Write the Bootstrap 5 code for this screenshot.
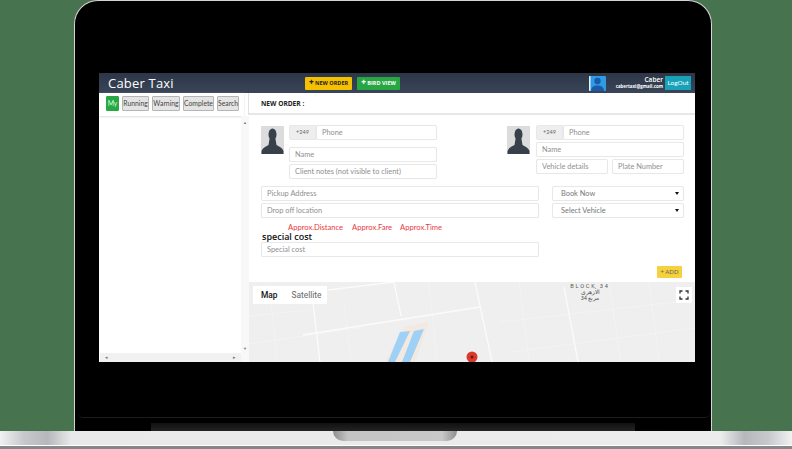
<!DOCTYPE html>
<html lang="en">
<head>
<meta charset="UTF-8">
<meta name="viewport" content="width=device-width, initial-scale=1.0">
<title>Caber Taxi</title>
<link rel="stylesheet" href="https://cdn.jsdelivr.net/npm/bootstrap@5.3.0/dist/css/bootstrap.min.css">
<style>
html, body { margin: 0; width: 792px; height: 449px; overflow: hidden; }
body { background: #47734f; font-family: Lato, "Liberation Sans", sans-serif; font-size: 7.5px; color: #222; }

/* laptop */
.lid { width: 638px; height: 431px; margin-left: 74px; padding: 72px 0 0 24px; background: #000; border: solid #d4d4d4; border-width: 1px 1px 0 1px; border-radius: 24px 24px 0 0; }
.lid-line { width: 632px; height: 5px; margin: 51px 0 0 -21px; border-bottom: 1px solid #1c1c1c; border-radius: 0 0 10px 10px; }
.lid-strip { width: 484px; height: 8px; margin: 5px 0 0 52px; background: linear-gradient(#111, #232323); }
.base { height: 18px; background: linear-gradient(90deg, #f1f1f1 0, #c6c9cc 3%, #b4b8bc 6%, #e9e9e9 9%, #ececec 91%, #b4b8bc 94%, #c6c9cc 97%, #f1f1f1 100%); border-bottom: 3px solid #85878a; box-shadow: inset 0 -1px 0 #fff; }
.notch { width: 124px; height: 10px; margin-left: 333px; background: linear-gradient(90deg, #8e8e8e, #c4c4c4 12%, #c8c8c8 88%, #8e8e8e); border-radius: 0 0 10px 10px; }

/* app */
.screen { width: 596px; height: 289px; background: #fff; overflow: hidden; }
.topbar { height: 20px; background: linear-gradient(#2c3647, #3a4558); color: #fff; }
.brand-name { width: 206px; padding-left: 9px; font: 400 13px "Open Sans", sans-serif; letter-spacing: .2px; }
.top-btn { height: 13px; padding: 0 3px; border: 0; border-radius: 1px; font: 700 5.5px/13px "Open Sans", sans-serif; }
.top-btn b { font-size: 8px; line-height: 1; }
.btn-order { width: 47px; background: #f5c000; color: #222; }
.btn-bird { width: 43px; margin-left: 5px; background: #27a744; color: #fff; }
.user-pic { width: 17px; height: 15px; margin-right: 3px; border-radius: 1px; }
.user-info { width: 54px; text-align: right; line-height: 7px; font-family: "Open Sans", sans-serif; }
.user-info strong { display: block; font-size: 6.5px; font-weight: 600; }
.user-info span { display: block; font-size: 4.4px; font-weight: 700; white-space: nowrap; }
.logout-btn { width: 26px; height: 14px; margin: 0 4px 0 2px; padding: 0; border: 0; border-radius: 0; background: #17a2b8; color: #fff; font-size: 6.5px; line-height: 14px; }

.main-row { height: 269px; }
.side-panel { width: 150px; flex: none; position: relative; }
.side-tabs { height: 23px; gap: 3px; padding: 3px 0 0 7px; box-shadow: 0 1px 2px #ddd; width: 145px; }
.tab-btn { height: 15px; padding: 0; border: 1px solid #b5b5b5; border-radius: 1px; background: #e4e4e4; color: #444; font-size: 6.8px; line-height: 13px; text-align: center; }
.tab-my { width: 13px; background: #28a745; border-color: #28a745; color: #dfd; }
.tab-w1 { width: 27px; } .tab-w2 { width: 28px; } .tab-w3 { width: 31px; } .tab-w4 { width: 22px; }
.scroll-v { width: 8px; height: 246px; margin-left: auto; padding: 4px 0 10px; background: #f8f8f8; color: #777; font-size: 4px; text-align: center; }
.scroll-h { position: absolute; left: 1px; bottom: 0; width: 141px; height: 9px; padding: 0 5px; background: #f1f1f1; color: #777; font-size: 5px; line-height: 9px; }

.order-panel { flex: 1; min-width: 0; }
.order-head { height: 22px; padding: 6px 0 0 12px; border-bottom: 2px solid #e7e7e7; box-shadow: -1px 0 0 #e2e2e2; font: 700 6.6px/10px "Open Sans", sans-serif; color: #222; }
.order-form { height: 167px; padding: 10px 11px 0 12px; }
.field { display: block; width: 100%; height: 15px; padding: 0 5px; border: 1px solid #e8e8e8; border-radius: 2px; background-color: #fff; box-shadow: 0 0 1px #eee; font-size: 7.4px; line-height: 13px; color: #777; }
.field::placeholder { color: #8f8f8f; }
.prefix { width: 27px; height: 15px; flex: none; background: #eee; border: 1px solid #e8e8e8; border-radius: 2px 0 0 2px; color: #666; font-size: 5.5px; line-height: 13px; text-align: center; }
.face { width: 23px; height: 28px; flex: none; margin-top: 1px; background: #dcdcdc; }
.person-a { width: 176px; }
.person-b { width: 177px; margin-left: 70px; }
.person-a .stack { width: 148px; margin-left: 5px; }
.person-b .stack { width: 148px; margin-left: 6px; }
.space-2 { margin-top: 2px; }
.space-7 { margin-top: 7px; }
.pick-field { width: 278px; }
.pick-select { width: 132px; margin-left: 13px; background: #fff url("data:image/svg+xml,%3Csvg xmlns='http://www.w3.org/2000/svg' width='4' height='3'%3E%3Cpath d='M0 0h4L2 3z' fill='%23111'/%3E%3C/svg%3E") no-repeat right 4px center; appearance: none; padding-left: 8px; }
.approx { padding: 4px 0 0 27px; height: 13px; color: #e8393f; font-size: 7.6px; line-height: 10px; }
.approx span:nth-child(1) { width: 64px; }
.approx span:nth-child(2) { width: 48px; }
.cost-label { height: 11px; padding-left: 1px; font: 600 9px/11px "Open Sans", sans-serif; color: #111; }
.add-btn { width: 25px; height: 12px; margin: 9px 2px 0 auto; padding: 0; border: 0; border-radius: 1px; background: #f4d13d; color: #665; font-size: 6px; line-height: 12px; }

.map-box { position: relative; height: 80px; background: #efefef; overflow: hidden; }
.map-box svg { display: block; }
.map-type { position: absolute; top: 4px; left: 4px; width: 74px; height: 18px; gap: 14px; padding-left: 8px; background: #fff; font: 8.4px/18px Roboto, sans-serif; }
.map-type strong { font-weight: 500; color: #111; }
.map-type span { color: #666; }
.map-full { position: absolute; top: 5px; right: 3px; width: 16px; height: 16px; background: #fff; }
.map-label { position: absolute; top: 1px; left: 318px; width: 46px; color: #555; font: 5.6px/6px Roboto, "Noto Sans", sans-serif; letter-spacing: 1.8px; text-align: center; }
.map-label span { letter-spacing: 0; }
</style>
</head>
<body>

<div class="lid">
    <div class="screen">
        <!-- top bar -->
        <div class="topbar d-flex align-items-center">
            <div class="brand-name">Caber Taxi</div>
            <button class="top-btn btn-order"><b>+</b> NEW ORDER</button>
            <button class="top-btn btn-bird"><b>+</b> BIRD VIEW</button>
            <div class="ms-auto d-flex align-items-center">
                <svg class="user-pic" viewBox="0 0 17 15"><rect width="17" height="15" fill="#2f9be6"/><rect width="1.500" height="15" fill="#e9f4fb"/><circle cx="8.500" cy="5" r="3.200" fill="#1a5aa8"/><path d="M2 15c0-4 3-5.500 6.500-5.500S15 11 15 15z" fill="#1a5aa8"/></svg>
                <div class="user-info"><strong>Caber</strong><span>cabertaxi@gmail.com</span></div>
                <button class="logout-btn">LogOut</button>
            </div>
        </div>

        <div class="main-row d-flex">
            <!-- left list -->
            <div class="side-panel">
                <div class="side-tabs d-flex">
                    <div class="tab-btn tab-my">My</div>
                    <div class="tab-btn tab-w1">Running</div>
                    <div class="tab-btn tab-w2">Warning</div>
                    <div class="tab-btn tab-w3">Complete</div>
                    <div class="tab-btn tab-w4">Search</div>
                </div>
                <div class="scroll-v d-flex flex-column justify-content-between"><span>&#9650;</span><span>&#9660;</span></div>
                <div class="scroll-h d-flex justify-content-between"><span>&#9666;</span><span>&#9656;</span></div>
            </div>

            <!-- order form -->
            <div class="order-panel">
                <div class="order-head">NEW ORDER :</div>
                <div class="order-form">
                    <div class="d-flex">
                        <div class="person-a d-flex">
                            <svg class="face" viewBox="0 0 23 28"><ellipse cx="11.500" cy="8.500" rx="4" ry="6" fill="#38404c"/><path d="M8.500 13h6l1 6c3 1.500 6 3 7 6v3H.5v-3c1-3 4-4.500 7-6z" fill="#38404c"/></svg>
                            <div class="stack">
                                <div class="d-flex"><div class="prefix">+249</div><input class="field form-control" placeholder="Phone"></div>
                                <input class="field form-control space-7" placeholder="Name">
                                <input class="field form-control space-2" placeholder="Client notes (not visible to client)">
                            </div>
                        </div>
                        <div class="person-b d-flex">
                            <svg class="face" viewBox="0 0 23 28"><ellipse cx="11.500" cy="8.500" rx="4" ry="6" fill="#38404c"/><path d="M8.500 13h6l1 6c3 1.500 6 3 7 6v3H.5v-3c1-3 4-4.500 7-6z" fill="#38404c"/></svg>
                            <div class="stack">
                                <div class="d-flex"><div class="prefix">+249</div><input class="field form-control" placeholder="Phone"></div>
                                <input class="field form-control space-2" placeholder="Name">
                                <div class="d-flex gap-1 space-2"><input class="field form-control" placeholder="Vehicle details"><input class="field form-control" placeholder="Plate Number"></div>
                            </div>
                        </div>
                    </div>

                    <div class="d-flex space-7"><input class="field form-control pick-field" placeholder="Pickup Address"><select class="field pick-select"><option>Book Now</option></select></div>
                    <div class="d-flex space-2"><input class="field form-control pick-field" placeholder="Drop off location"><select class="field pick-select"><option>Select Vehicle</option></select></div>

                    <div class="approx d-flex"><span>Approx.Distance</span><span>Approx.Fare</span><span>Approx.Time</span></div>
                    <div class="cost-label">special cost</div>
                    <input class="field form-control pick-field" placeholder="Special cost">
                    <button class="add-btn d-block">+ ADD</button>
                </div>

                <!-- map -->
                <div class="map-box">
                    <svg width="446" height="80" viewBox="0 0 446 80">
                        <g stroke="#f5f5f5" stroke-width=".7" fill="none">
                            <path d="M20 0l8 80M95 20l7 60M180 0l8 80M270 0l10 80M360 0l12 80M400 0l10 80"/>
                            <path d="M0 62l110-16M250 40l196-22M262 70l184-24M0 34l60-6"/>
                        </g>
                        <path d="M136 80l20-36 24-4-14 40z" fill="#f3e9e0"/>
                        <path d="M151 50l10-1-15 31h-7zM165 49l10-2-14 33h-8z" fill="#9fd0f5"/>
                        <g stroke="#fbfbfb" stroke-width="1.300" fill="none">
                            <path d="M79 8l66-8M54 53L231 25M226 0l17 80M315 5l14 75M145 0l7 34M64 21l7 59"/>
                        </g>
                        <circle cx="223" cy="75" r="5.500" fill="#d93a2b"/><circle cx="223" cy="75" r="1.500" fill="#6d1510"/>
                    </svg>
                    <div class="map-type d-flex"><strong>Map</strong><span>Satellite</span></div>
                    <div class="map-label">BLOCK 34<br><span dir="rtl">الأزهري<br>مربع 34</span></div>
                    <div class="map-full"><svg width="16" height="16" viewBox="0 0 16 16" fill="none" stroke="#333" stroke-width="1.300"><path d="M4 6.500V4h2.500M9.500 4H12v2.500M12 9.500V12H9.500M6.500 12H4V9.500"/></svg></div>
                </div>
            </div>
        </div>
    </div>
    <div class="lid-line"></div>
    <div class="lid-strip"></div>
</div>
<div class="base"><div class="notch"></div></div>

<script src="https://cdn.jsdelivr.net/npm/bootstrap@5.3.0/dist/js/bootstrap.bundle.min.js"></script>
</body>
</html>
